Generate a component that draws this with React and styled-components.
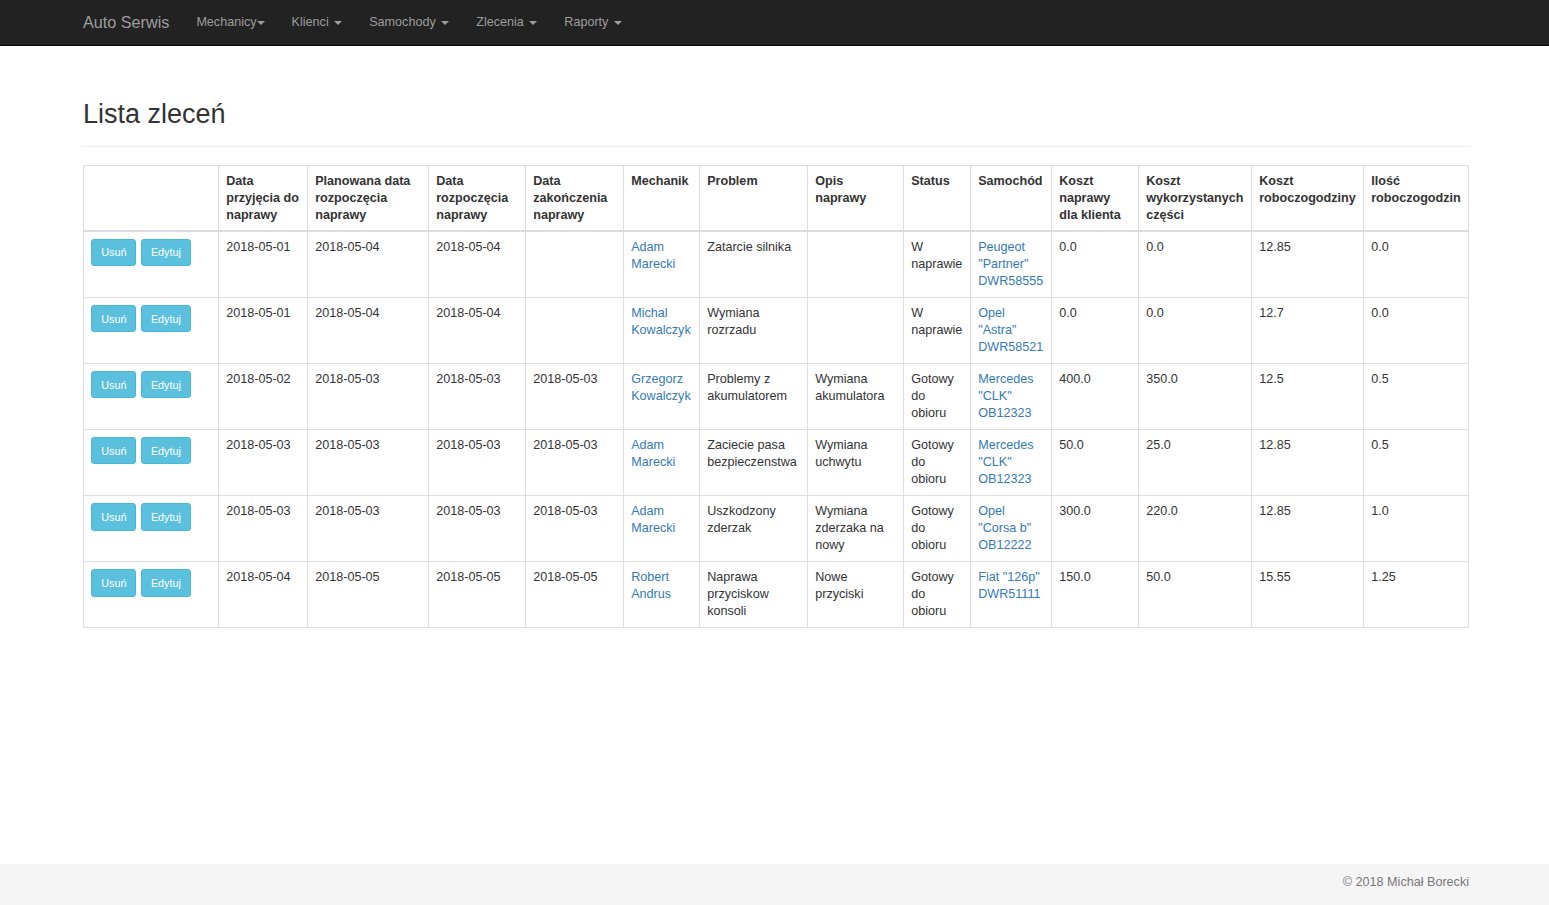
import React from "react";
import styled, { createGlobalStyle } from "styled-components";

const GlobalStyle = createGlobalStyle`
  * {
    box-sizing: border-box;
  }

  html,
  body {
    margin: 0;
    padding: 0;
  }

  body {
    font-family: "Liberation Sans", Arial, Helvetica, sans-serif;
    font-size: 12.6px;
    line-height: 16.9px;
    color: #333;
    background: #fff;
  }
`;

const Page = styled.div`
  min-height: 100vh;
  display: flex;
  flex-direction: column;
`;

const Navbar = styled.nav`
  height: 46px;
  background: #222;
  border-bottom: 1px solid #080808;
  display: flex;
  align-items: center;
  padding-left: 69.5px;
`;

const Brand = styled.a`
  padding: 0 13.5px;
  font-size: 16.2px;
  color: #9d9d9d;
  text-decoration: none;
`;

const NavList = styled.ul`
  display: flex;
  list-style: none;
  margin: 0;
  padding: 0;
`;

const NavLink = styled.a`
  display: block;
  padding: 0 13.5px;
  line-height: 17px;
  color: #9d9d9d;
  text-decoration: none;
`;

const Caret = styled.span`
  display: inline-block;
  width: 0;
  height: 0;
  margin-left: ${(props) => (props.$tight ? "0" : "2px")};
  vertical-align: middle;
  border-top: 4px solid #9d9d9d;
  border-left: 4px solid transparent;
  border-right: 4px solid transparent;
`;

const Main = styled.main`
  flex: 1;
  padding: 0 80px 0 83px;
`;

const PageHeader = styled.div`
  margin-top: 53.5px;
  padding-bottom: 16.5px;
  margin-bottom: 18px;
  border-bottom: 1px solid #eee;
`;

const Title = styled.h2`
  margin: 0;
  font-size: 27px;
  font-weight: 500;
  line-height: 1.1;
  color: #333;
`;

const Table = styled.table`
  width: 1386px;
  table-layout: fixed;
  border-collapse: collapse;
  border: 1px solid #ddd;
`;

const Col = styled.col`
  width: ${(props) => props.$w}px;
`;

const HeadCell = styled.th`
  padding: 7.2px 7.2px 6.2px;
  text-align: left;
  vertical-align: top;
  font-weight: bold;
  border: 1px solid #ddd;
  border-bottom-width: 2px;
`;

const Cell = styled.td`
  padding: 7.2px;
  vertical-align: top;
  border: 1px solid #ddd;
`;

const Link = styled.a`
  color: #337ab7;
  text-decoration: none;
`;

const ActionButton = styled.button`
  display: inline-block;
  vertical-align: top;
  margin-right: 4.5px;
  padding: 4.5px 9px;
  font-family: inherit;
  font-size: 10.8px;
  line-height: 16.2px;
  color: #fff;
  background: #5bc0de;
  border: 1px solid #46b8da;
  border-radius: 3px;
  cursor: pointer;
`;

const Footer = styled.footer`
  height: 41px;
  padding: 10px 80px 0 83px;
  background: #f5f5f5;
  color: #777;
  text-align: right;
  line-height: 17px;
`;

const columns = [
  { title: "", w: 135 },
  { title: "Data przyjęcia do naprawy", w: 89 },
  { title: "Planowana data rozpoczęcia naprawy", w: 121 },
  { title: "Data rozpoczęcia naprawy", w: 97 },
  { title: "Data zakończenia naprawy", w: 98 },
  { title: "Mechanik", w: 76 },
  { title: "Problem", w: 108 },
  { title: "Opis naprawy", w: 96 },
  { title: "Status", w: 67 },
  { title: "Samochód", w: 81 },
  { title: "Koszt naprawy dla klienta", w: 87 },
  { title: "Koszt wykorzystanych części", w: 113 },
  { title: "Koszt roboczogodziny", w: 112 },
  { title: "Ilość roboczogodzin", w: 105 },
];

const orders = [
  ["2018-05-01", "2018-05-04", "2018-05-04", "", "Adam Marecki", "Zatarcie silnika", "", "W naprawie", 'Peugeot "Partner" DWR58555', "0.0", "0.0", "12.85", "0.0"],
  ["2018-05-01", "2018-05-04", "2018-05-04", "", "Michal Kowalczyk", "Wymiana rozrzadu", "", "W naprawie", 'Opel "Astra" DWR58521', "0.0", "0.0", "12.7", "0.0"],
  ["2018-05-02", "2018-05-03", "2018-05-03", "2018-05-03", "Grzegorz Kowalczyk", "Problemy z akumulatorem", "Wymiana akumulatora", "Gotowy do obioru", 'Mercedes "CLK" OB12323', "400.0", "350.0", "12.5", "0.5"],
  ["2018-05-03", "2018-05-03", "2018-05-03", "2018-05-03", "Adam Marecki", "Zaciecie pasa bezpieczenstwa", "Wymiana uchwytu", "Gotowy do obioru", 'Mercedes "CLK" OB12323', "50.0", "25.0", "12.85", "0.5"],
  ["2018-05-03", "2018-05-03", "2018-05-03", "2018-05-03", "Adam Marecki", "Uszkodzony zderzak", "Wymiana zderzaka na nowy", "Gotowy do obioru", 'Opel "Corsa b" OB12222', "300.0", "220.0", "12.85", "1.0"],
  ["2018-05-04", "2018-05-05", "2018-05-05", "2018-05-05", "Robert Andrus", "Naprawa przyciskow konsoli", "Nowe przyciski", "Gotowy do obioru", 'Fiat "126p" DWR51111', "150.0", "50.0", "15.55", "1.25"],
];

const linkColumns = [4, 8];

const menu = ["Mechanicy", "Klienci", "Samochody", "Zlecenia", "Raporty"];

export default function App() {
  return (
    <Page>
      <GlobalStyle />
      <Navbar>
        <Brand href="#">Auto Serwis</Brand>
        <NavList>
          {menu.map((item, i) => (
            <li key={item}>
              <NavLink href="#">
                {item}
                {i === 0 ? "" : " "}
                <Caret $tight={i === 0} />
              </NavLink>
            </li>
          ))}
        </NavList>
      </Navbar>

      <Main>
        <PageHeader>
          <Title>Lista zleceń</Title>
        </PageHeader>

        <Table>
          <colgroup>
            {columns.map((c, i) => (
              <Col key={i} $w={c.w} />
            ))}
          </colgroup>
          <thead>
            <tr>
              {columns.map((c, i) => (
                <HeadCell key={i}>{c.title}</HeadCell>
              ))}
            </tr>
          </thead>
          <tbody>
            {orders.map((row, r) => (
              <tr key={r}>
                <Cell>
                  <ActionButton>Usuń</ActionButton>
                  <ActionButton>Edytuj</ActionButton>
                </Cell>
                {row.map((value, i) => (
                  <Cell key={i}>
                    {linkColumns.includes(i) ? <Link href="#">{value}</Link> : value}
                  </Cell>
                ))}
              </tr>
            ))}
          </tbody>
        </Table>
      </Main>

      <Footer>© 2018 Michał Borecki</Footer>
    </Page>
  );
}
